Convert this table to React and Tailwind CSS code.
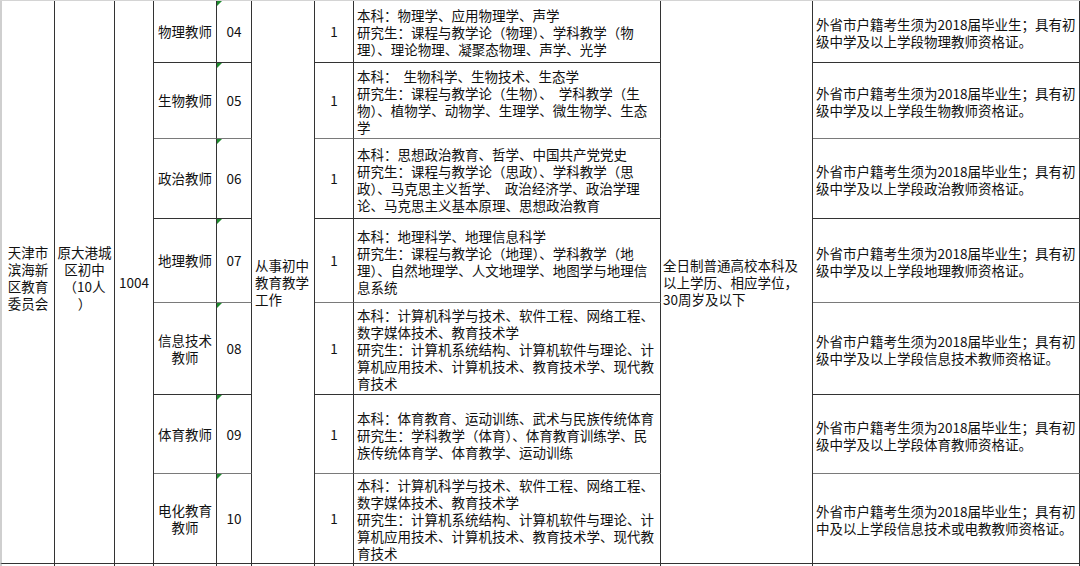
import React from "react";

const rows = [
  {
    job: ["物理教师"],
    code: "04",
    h: "bottom-dark",
    qual: [
      "本科：物理学、应用物理学、声学",
      "研究生：课程与教学论（物理）、学科教学（物",
      "理）、理论物理、凝聚态物理、声学、光学",
    ],
    req: ["外省市户籍考生须为2018届毕业生；具有初", "级中学及以上学段物理教师资格证。"],
  },
  {
    job: ["生物教师"],
    code: "05",
    h: "bottom-gray",
    qual: [
      "本科：  生物科学、生物技术、生态学",
      "研究生：课程与教学论（生物）、  学科教学（生",
      "物）、植物学、动物学、生理学、微生物学、生态",
      "学",
    ],
    req: ["外省市户籍考生须为2018届毕业生；具有初", "级中学及以上学段生物教师资格证。"],
  },
  {
    job: ["政治教师"],
    code: "06",
    h: "bottom-dark",
    qual: [
      "本科：思想政治教育、哲学、中国共产党党史",
      "研究生：课程与教学论（思政）、学科教学（思",
      "政）、马克思主义哲学、  政治经济学、政治学理",
      "论、马克思主义基本原理、思想政治教育",
    ],
    req: ["外省市户籍考生须为2018届毕业生；具有初", "级中学及以上学段政治教师资格证。"],
  },
  {
    job: ["地理教师"],
    code: "07",
    h: "bottom-gray",
    qual: [
      "本科：地理科学、地理信息科学",
      "研究生：课程与教学论（地理）、学科教学（地",
      "理）、自然地理学、人文地理学、地图学与地理信",
      "息系统",
    ],
    req: ["外省市户籍考生须为2018届毕业生；具有初", "级中学及以上学段地理教师资格证。"],
  },
  {
    job: ["信息技术", "教师"],
    code: "08",
    h: "bottom-dark",
    qual: [
      "本科：计算机科学与技术、软件工程、网络工程、",
      "数字媒体技术、教育技术学",
      "研究生：计算机系统结构、计算机软件与理论、计",
      "算机应用技术、计算机技术、教育技术学、现代教",
      "育技术",
    ],
    req: ["外省市户籍考生须为2018届毕业生；具有初", "级中学及以上学段信息技术教师资格证。"],
  },
  {
    job: ["体育教师"],
    code: "09",
    h: "bottom-gray",
    qual: [
      "本科：体育教育、运动训练、武术与民族传统体育",
      "研究生：学科教学（体育）、体育教育训练学、民",
      "族传统体育学、体育教学、运动训练",
    ],
    req: ["外省市户籍考生须为2018届毕业生；具有初", "级中学及以上学段体育教师资格证。"],
  },
  {
    job: ["电化教育", "教师"],
    code: "10",
    h: "bottom-dark",
    qual: [
      "本科：计算机科学与技术、软件工程、网络工程、",
      "数字媒体技术、教育技术学",
      "研究生：计算机系统结构、计算机软件与理论、计",
      "算机应用技术、计算机技术、教育技术学、现代教",
      "育技术",
    ],
    req: ["外省市户籍考生须为2018届毕业生；具有初", "中及以上学段信息技术或电教教师资格证。"],
  },
];

function Lines({ lines }) {
  return lines.map((l, i) => (
    <div key={i} className="whitespace-pre">
      {l}
    </div>
  ));
}

export default function App() {
  return (
    <div
      className="w-[1080px] h-[566px] overflow-hidden bg-white text-[#111] text-[13.5px] leading-[17px]"
      style={{ fontFamily: '"Noto Sans CJK SC", "Noto Sans", sans-serif' }}
    >
      <div className="grid grid-cols-[55px_60px_39px_63px_35px_63px_39px_307px_152px_267px] grid-rows-[62px_76px_80px_84px_92px_79px_90px_6px] border-t border-[#d4d4d4]">
        {rows.map((r, i) => {
          const bottom = r.h === "bottom-gray" ? "border-b-[#7a7a7a]" : "border-b-[#333]";
          const cellB = `border-b ${bottom}`;
          return (
            <React.Fragment key={r.code}>
              {i === 0 && (
                <>
                  <div className="row-span-7 border-l-2 border-l-[#cfcfcf] border-r border-r-[#333] border-b border-b-[#333] flex flex-col items-center justify-center text-center pb-[8px]">
                    <Lines lines={["天津市", "滨海新", "区教育", "委员会"]} />
                  </div>
                  <div className="row-span-7 border-r border-r-[#333] border-b border-b-[#333] flex flex-col items-center justify-center text-center pb-[8px]">
                    <Lines lines={["原大港城", "区初中", "（10人", "）"]} />
                  </div>
                  <div className="row-span-7 border-r border-r-[#333] border-b border-b-[#333] flex items-center justify-center">
                    1004
                  </div>
                </>
              )}
              <div className={`border-r border-r-[#333] ${cellB} flex flex-col items-center justify-center text-center`}>
                <Lines lines={r.job} />
              </div>
              <div className={`relative border-r border-r-[#333] ${cellB} flex items-center justify-center`}>
                <svg className="absolute left-0 top-0" width="5" height="5" viewBox="0 0 5 5">
                  <polygon points="0,0 5,0 0,5" fill="#1f8a2e" />
                </svg>
                {r.code}
              </div>
              {i === 0 && (
                <div className="row-span-7 border-r border-r-[#333] border-b border-b-[#333] flex flex-col justify-center pl-[3px]">
                  <Lines lines={["从事初中", "教育教学", "工作"]} />
                </div>
              )}
              <div className={`border-r border-r-[#333] ${cellB} flex items-center justify-center`}>1</div>
              <div className={`border-r border-r-[#333] ${cellB} flex flex-col justify-center pl-[3px] pt-[2px]`}>
                <Lines lines={r.qual} />
              </div>
              {i === 0 && (
                <div className="row-span-7 border-r border-r-[#333] border-b border-b-[#333] flex flex-col justify-center pl-[2px]">
                  <Lines lines={["全日制普通高校本科及", "以上学历、相应学位，", "30周岁及以下"]} />
                </div>
              )}
              <div className={`border-r border-r-[#333] ${cellB} flex flex-col justify-center pl-[3px] pt-[3px]`}>
                <Lines lines={r.req} />
              </div>
            </React.Fragment>
          );
        })}
        <div className="border-l-2 border-l-[#cfcfcf] border-r border-r-[#333]" />
        <div className="border-r border-r-[#333]" />
        <div className="border-r border-r-[#333]" />
        <div className="border-r border-r-[#333]" />
        <div className="border-r border-r-[#333]" />
        <div className="border-r border-r-[#333]" />
        <div className="border-r border-r-[#333]" />
        <div className="border-r border-r-[#333]" />
        <div className="border-r border-r-[#333]" />
        <div className="border-r border-r-[#333]" />
      </div>
    </div>
  );
}
